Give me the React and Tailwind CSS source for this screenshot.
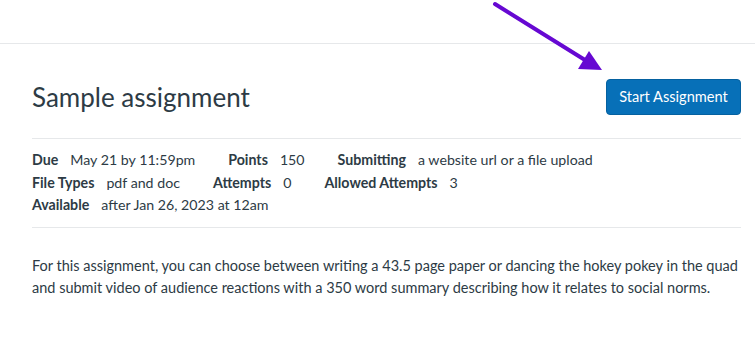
export default function App() {
  const lato = { fontFamily: 'Lato, "Liberation Sans", sans-serif' };
  return (
    <div className="relative w-[755px] h-[345px] bg-white text-[#2d3b45] overflow-hidden" style={lato}>
      <div className="h-[44px] border-b border-[#e6e8ea]" />
      <div className="pl-[32px] pr-[14px]">
        <div className="flex items-center justify-between h-[95px] border-b border-[#e6e8ea]">
          <h1 className="text-[26px] font-normal leading-none mt-[12px]">Sample assignment</h1>
          <button className="bg-[#0770b8] text-white text-[14.6px] rounded-[4px] border border-[#0561a0] w-[135px] h-[36px] mt-[12px]">
            Start Assignment
          </button>
        </div>
        <div className="pt-[10px] pb-[10px] text-[14.2px] leading-[22.5px] border-b border-[#e6e8ea]">
          <div className="flex">
            <span className="font-bold mr-[12px]">Due</span>
            <span className="mr-[33px]">May 21 by 11:59pm</span>
            <span className="font-bold mr-[12px]">Points</span>
            <span className="mr-[33px]">150</span>
            <span className="font-bold mr-[12px]">Submitting</span>
            <span>a website url or a file upload</span>
          </div>
          <div className="flex">
            <span className="font-bold mr-[12px]">File Types</span>
            <span className="mr-[33px]">pdf and doc</span>
            <span className="font-bold mr-[12px]">Attempts</span>
            <span className="mr-[33px]">0</span>
            <span className="font-bold mr-[12px]">Allowed Attempts</span>
            <span>3</span>
          </div>
          <div className="flex">
            <span className="font-bold mr-[12px]">Available</span>
            <span>after Jan 26, 2023 at 12am</span>
          </div>
        </div>
        <p className="pt-[27px] text-[14.5px] leading-[22px]">
          For this assignment, you can choose between writing a 43.5 page paper or dancing the hokey pokey in the quad and submit video of audience reactions with a 350 word summary describing how it relates to social norms.
        </p>
      </div>
      <svg className="absolute left-0 top-0 pointer-events-none" width="755" height="345">
        <line x1="495" y1="4" x2="585" y2="60" stroke="#6608d2" strokeWidth="4" strokeLinecap="round" />
        <polygon points="589,51 602,70 578,69" fill="#6608d2" />
      </svg>
    </div>
  );
}
